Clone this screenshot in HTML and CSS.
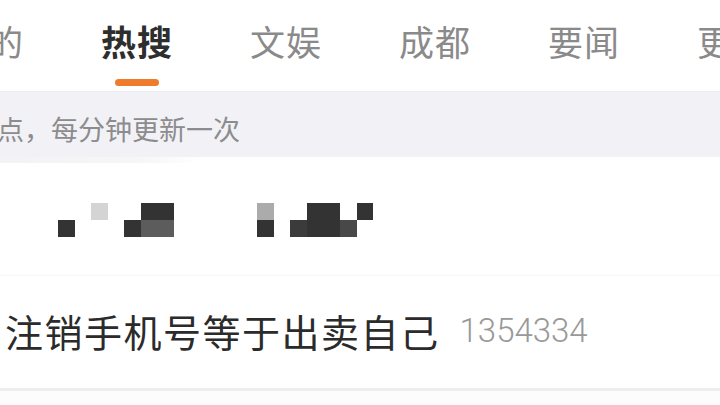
FILE: index.html
```html
<!DOCTYPE html>
<html lang="zh-CN">
<head>
<meta charset="utf-8">
<title>热搜</title>
<link rel="stylesheet" href="styles.css">
</head>
<body>
<div class="page">
  <nav class="tabs">
    <div class="tab"><span class="label">我的</span></div>
    <div class="tab active"><span class="label">热搜</span><span class="indicator"></span></div>
    <div class="tab"><span class="label">文娱</span></div>
    <div class="tab"><span class="label">成都</span></div>
    <div class="tab"><span class="label">要闻</span></div>
    <div class="tab"><span class="label">更多</span></div>
  </nav>
  <div class="notice"><span class="notice-text">实时热点，每分钟更新一次</span></div>
  <div class="shade"></div>
  <div class="row mosaic-row">
    <div class="mosaic">
      <i></i><i></i><i class="l"></i><i></i><i></i><i class="d"></i><i class="d"></i><i></i><i></i><i></i><i></i><i></i><i class="g"></i><i></i><i></i><i class="d"></i><i class="d"></i><i></i><i class="d"></i>
      <i class="d"></i><i></i><i></i><i></i><i class="d"></i><i class="m"></i><i class="m"></i><i></i><i></i><i></i><i></i><i></i><i class="d"></i><i></i><i class="d2"></i><i class="d"></i><i class="d"></i><i class="d3"></i><i></i>
    </div>
  </div>
  <div class="row item-row">
    <span class="title">注销手机号等于出卖自己</span>
    <span class="count">1354334</span>
  </div>
  <div class="rest"></div>
</div>
</body>
</html>
```
FILE: styles.css
```css
html, body {
  margin: 0;
  padding: 0;
  background: #ffffff;
}
.page {
  width: 720px;
  height: 405px;
  overflow: hidden;
  font-family: "Noto Sans CJK SC", "Noto Sans", sans-serif;
  background: #ffffff;
}
.tabs {
  display: flex;
  gap: 77px;
  margin-left: -48px;
  height: 92px;
  padding-top: 16px;
  box-sizing: border-box;
  border-bottom: 1px solid #ececf0;
  white-space: nowrap;
}
.tab {
  width: 72px;
  flex: 0 0 72px;
  display: flex;
  flex-direction: column;
  align-items: center;
}
.label {
  font-size: 35px;
  line-height: 50px;
  letter-spacing: 1px;
  color: #8a8a8a;
}
.tab.active .label {
  color: #2e2e2e;
  font-weight: 700;
}
.indicator {
  display: block;
  width: 44px;
  height: 7px;
  margin-top: 13px;
  border-radius: 4px;
  background: #ef7b2d;
}
.notice {
  height: 65px;
  box-sizing: border-box;
  padding-top: 7px;
  display: flex;
  align-items: center;
  background: #f2f2f6;
  overflow: hidden;
}
.notice-text {
  margin-left: -84px;
  font-size: 27px;
  color: #8c8c8e;
  white-space: nowrap;
}
.shade {
  width: 200px;
  height: 6px;
  background: linear-gradient(90deg, #f3f3f5 0%, #f6f6f7 70%, rgba(255,255,255,0) 100%);
  border-radius: 0 0 40px 0;
}
.row {
  box-sizing: border-box;
}
.mosaic-row {
  height: 113px;
  padding-top: 40px;
  padding-left: 58px;
  border-bottom: 1px solid #f7f7f7;
}
.mosaic {
  display: grid;
  grid-template-columns: repeat(19, 16.6px);
  grid-template-rows: repeat(2, 17px);
}
.mosaic i { display: block; }
.mosaic .d { background: #333333; }
.mosaic .d2 { background: #3b3b3b; }
.mosaic .d3 { background: #484848; }
.mosaic .m { background: #5c5c5c; }
.mosaic .g { background: #ababab; }
.mosaic .l { background: #d4d4d4; }
.item-row {
  height: 115px;
  display: flex;
  align-items: center;
  padding-left: 5px;
  padding-bottom: 4px;
  border-bottom: 3px solid #eeeeee;
}
.title {
  font-size: 38px;
  letter-spacing: 1.5px;
  color: #2b2b2b;
  white-space: nowrap;
}
.count {
  margin-left: 20px;
  font-family: "Roboto", "Noto Sans", sans-serif;
  font-weight: 300;
  font-size: 33px;
  color: #999999;
}
.rest {
  height: 20px;
  background: #fcfcfc;
}
```
